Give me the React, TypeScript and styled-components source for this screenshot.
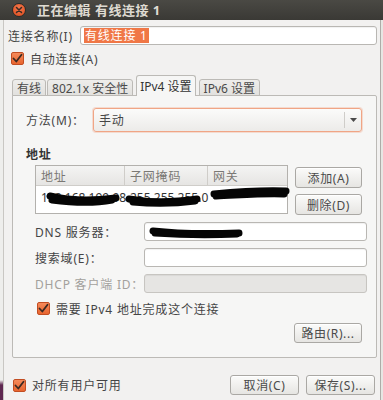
import React from "react";
import styled, { createGlobalStyle } from "styled-components";

const Global = createGlobalStyle`
  html, body { margin: 0; padding: 0; background: #dedcd8; }
  body { font-family: "Noto Sans", "Noto Sans CJK SC", sans-serif; font-size: 12px; color: #3c3c3c; }
  * { box-sizing: border-box; }
`;

const Page = styled.div`
  width: 383px;
  height: 400px;
  display: flex;
  flex-direction: column;
  overflow: hidden;
`;

const TitleBar = styled.div`
  height: 20px;
  flex: none;
  background: linear-gradient(#4a4944, #3a3935);
  display: flex;
  align-items: center;
  padding-left: 12px;
  gap: 11px;
`;

const CloseBtn = styled.div`
  width: 14px;
  height: 14px;
  border-radius: 50%;
  background: radial-gradient(circle at 50% 35%, #f47a4e, #dc4a1c);
  border: 1px solid #2c2b28;
  display: flex;
  align-items: center;
  justify-content: center;
`;

const TitleText = styled.div`
  color: #dfdbd2;
  font-weight: bold;
  font-size: 13px;
  letter-spacing: 0.5px;
  line-height: 20px;
`;

const BodyRow = styled.div`
  flex: 1;
  display: flex;
`;

const Strip = styled.div<{ $w: number }>`
  width: ${(p) => p.$w}px;
  flex: none;
  background: linear-gradient(#eeeeec 0px, #eeeeec 360px, #5e2750 365px, #5e2750 400px);
`;

const RightStrip = styled.div`
  width: 2px;
  flex: none;
  background: #e7e6e3;
`;

const Body = styled.div`
  width: 378px;
  flex: none;
  background: #f2f1f0;
  border-right: 1px solid #aeaca8;
  border-left: 1px solid #c9c7c3;
  padding: 6px 3px 0 4px;
  display: flex;
  flex-direction: column;
`;

const NameRow = styled.div`
  display: flex;
  align-items: center;
  height: 19px;
`;

const Label = styled.div<{ $w?: number; $disabled?: boolean }>`
  width: ${(p) => (p.$w ? `${p.$w}px` : "auto")};
  flex: none;
  font-size: 12px;
  letter-spacing: 0.8px;
  color: ${(p) => (p.$disabled ? "#a3a19d" : "#454545")};
  white-space: nowrap;
`;

const TextInput = styled.div<{ $disabled?: boolean }>`
  flex: 1;
  height: 100%;
  background: ${(p) => (p.$disabled ? "#e6e5e3" : "#ffffff")};
  border: 1px solid ${(p) => (p.$disabled ? "#c7c5c1" : "#b9b7b3")};
  border-radius: 3px;
  box-shadow: inset 0 1px 1px rgba(0, 0, 0, 0.06);
  display: flex;
  align-items: center;
  padding-left: 3px;
  position: relative;
`;

const Selected = styled.span`
  background: #f07746;
  color: #fff;
  font-size: 12px;
  letter-spacing: 0.8px;
  padding: 0 1px;
  line-height: 15px;
`;

const CheckRow = styled.div<{ $mt: number; $ml: number }>`
  display: flex;
  align-items: center;
  gap: 6px;
  margin-top: ${(p) => p.$mt}px;
  margin-left: ${(p) => p.$ml}px;
  height: 13px;
`;

const CheckBox = styled.div`
  width: 13px;
  height: 13px;
  flex: none;
  border-radius: 2px;
  background: linear-gradient(#f58a5a, #e8652f);
  border: 1px solid #c24d22;
  display: flex;
  align-items: center;
  justify-content: center;
`;

const Tabs = styled.div`
  margin-top: 10px;
  margin-left: 4px;
  display: flex;
  align-items: flex-end;
  gap: 1px;
  height: 21px;
  position: relative;
  z-index: 1;
`;

const Tab = styled.div<{ $active?: boolean }>`
  height: ${(p) => (p.$active ? 21 : 17)}px;
  padding: 0 ${(p) => (p.$active ? 3 : 4)}px;
  margin: 0 ${(p) => (p.$active ? 2 : 0)}px;
  background: ${(p) => (p.$active ? "#f6f6f5" : "linear-gradient(#eeedeb, #e2e1de)")};
  border: 1px solid #bcbab6;
  border-bottom: ${(p) => (p.$active ? "none" : "1px solid #bcbab6")};
  border-radius: 3px 3px 0 0;
  display: flex;
  align-items: center;
  font-size: 12px;
  letter-spacing: 0;
  color: ${(p) => (p.$active ? "#333" : "#4a4a4a")};
  white-space: nowrap;
`;

const Panel = styled.div`
  margin-left: 4px;
  margin-top: -1px;
  border: 1px solid #bcbab6;
  border-radius: 0 2px 2px 2px;
  background: #f6f6f5;
  padding: 12px 14px 13px 13px;
  display: flex;
  flex-direction: column;
  height: 263px;
`;

const MethodRow = styled.div`
  display: flex;
  align-items: center;
  height: 24px;
`;

const Combo = styled.div`
  flex: 1;
  height: 100%;
  border: 1px solid #f0a585;
  border-radius: 3px;
  background: linear-gradient(#fbfbfa, #ecebe9);
  box-shadow: 0 0 0 1px rgba(240, 140, 100, 0.25);
  display: flex;
  align-items: center;
  padding-left: 5px;
`;

const ComboText = styled.div`
  flex: 1;
  font-size: 12px;
  letter-spacing: 0.8px;
  color: #454545;
`;

const ComboSep = styled.div`
  width: 1px;
  height: 16px;
  background: #cfcdc9;
`;

const ComboArrow = styled.div`
  width: 16px;
  display: flex;
  justify-content: center;
`;

const Heading = styled.div`
  margin-top: 16px;
  font-weight: bold;
  font-size: 12px;
  letter-spacing: 0.8px;
  line-height: 13px;
  color: #333;
`;

const AddressBlock = styled.div`
  margin-top: 4px;
  margin-left: 9px;
  display: flex;
  gap: 7px;
`;

const Table = styled.div`
  width: 257px;
  height: 49px;
  border: 1px solid #b3b1ad;
  background: #fff;
  display: flex;
  flex-direction: column;
`;

const HeaderRow = styled.div`
  display: grid;
  grid-template-columns: 89px 83px 1fr;
  height: 20px;
  background: linear-gradient(#f4f4f3, #e6e5e3);
  border-bottom: 1px solid #cfcdc9;
`;

const HeaderCell = styled.div`
  border-right: 1px solid #cfcdc9;
  display: flex;
  align-items: center;
  padding-left: 5px;
  font-size: 12px;
  letter-spacing: 0.8px;
  color: #7a7874;
  &:last-child { border-right: none; }
`;

const DataRow = styled.div`
  display: grid;
  grid-template-columns: 89px 83px 1fr;
  height: 22px;
`;

const DataCell = styled.div`
  position: relative;
  display: flex;
  align-items: center;
  padding-left: 5px;
  font-size: 12px;
  color: #333;
  white-space: nowrap;
  overflow: visible;
`;

const Scribble = styled.svg`
  position: absolute;
  pointer-events: none;
`;

const ButtonCol = styled.div`
  display: flex;
  flex-direction: column;
  gap: 6px;
  padding-top: 2px;
`;

const Button = styled.div<{ $w: number; $h?: number }>`
  width: ${(p) => p.$w}px;
  height: ${(p) => p.$h ?? 20}px;
  border: 1px solid #aaa8a4;
  border-radius: 3px;
  background: linear-gradient(#fbfbfa, #e6e5e2);
  box-shadow: inset 0 1px 0 #fff;
  display: flex;
  align-items: center;
  justify-content: center;
  font-size: 12px;
  letter-spacing: 0.6px;
  color: #4a4a4a;
  white-space: nowrap;
`;

const FormGrid = styled.div`
  margin-top: 7px;
  margin-left: 9px;
  display: grid;
  grid-template-columns: 109px 223px;
  grid-auto-rows: 19px;
  row-gap: 7px;
  align-items: center;
`;

const FormInput = styled(TextInput)`
  height: 19px;
`;

const RouteRow = styled.div`
  margin-top: 8px;
  display: flex;
  justify-content: flex-end;
`;

const BottomRow = styled.div`
  margin-top: 17px;
  display: flex;
  align-items: center;
  padding-left: 5px;
`;

const BottomCheck = styled.div`
  display: flex;
  align-items: center;
  gap: 6px;
  flex: 1;
`;

const BottomButtons = styled.div`
  display: flex;
  gap: 7px;
  padding-right: 2px;
`;

const Check = () => (
  <svg width="11" height="11" viewBox="0 0 11 11">
    <path d="M1.5 5.5 L4.3 8.5 L9.5 1.8" fill="none" stroke="#3b2a22" strokeWidth="1.8" strokeLinecap="round" strokeLinejoin="round" />
  </svg>
);

const Blot = ({ left, top, w, h, d }: { left: number; top: number; w: number; h: number; d: string }) => (
  <Scribble style={{ left, top }} width={w} height={h} viewBox={`0 0 ${w} ${h}`}>
    <path d={d} fill="none" stroke="#050505" strokeWidth="7" strokeLinecap="round" strokeLinejoin="round" />
  </Scribble>
);

export default function App() {
  return (
    <Page>
      <Global />
      <TitleBar>
        <CloseBtn>
          <svg width="8" height="8" viewBox="0 0 8 8">
            <path d="M1.5 1.5 L6.5 6.5 M6.5 1.5 L1.5 6.5" stroke="#3a2a24" strokeWidth="1.5" strokeLinecap="round" />
          </svg>
        </CloseBtn>
        <TitleText>正在编辑 有线连接 1</TitleText>
      </TitleBar>
      <BodyRow>
        <Strip $w={3} />
        <Body>
          <NameRow>
            <Label $w={72}>连接名称(I)</Label>
            <TextInput>
              <Selected>有线连接 1</Selected>
            </TextInput>
          </NameRow>
          <CheckRow $mt={7} $ml={3}>
            <CheckBox>
              <Check />
            </CheckBox>
            <Label>自动连接(A)</Label>
          </CheckRow>
          <Tabs>
            <Tab>有线</Tab>
            <Tab>802.1x 安全性</Tab>
            <Tab $active>IPv4 设置</Tab>
            <Tab>IPv6 设置</Tab>
          </Tabs>
          <Panel>
            <MethodRow>
              <Label $w={67}>方法(M)：</Label>
              <Combo>
                <ComboText>手动</ComboText>
                <ComboSep />
                <ComboArrow>
                  <svg width="7" height="4" viewBox="0 0 7 4">
                    <path d="M0 0 L7 0 L3.5 4 Z" fill="#4a4a4a" />
                  </svg>
                </ComboArrow>
              </Combo>
            </MethodRow>
            <Heading>地址</Heading>
            <AddressBlock>
              <Table>
                <HeaderRow>
                  <HeaderCell>地址</HeaderCell>
                  <HeaderCell>子网掩码</HeaderCell>
                  <HeaderCell>网关</HeaderCell>
                </HeaderRow>
                <DataRow>
                  <DataCell>
                    192.168.199.98
                    <Blot left={10} top={2} w={74} h={20} d="M4 8 C20 12 40 14 70 10 M6 12 C30 15 50 15 66 12" />
                  </DataCell>
                  <DataCell>
                    255.255.255.0
                    <Blot left={0} top={3} w={80} h={20} d="M4 10 C20 13 45 14 72 10 M8 13 C30 15 55 14 70 12" />
                  </DataCell>
                  <DataCell>
                    <Blot left={2} top={0} w={82} h={18} d="M4 8 C25 6 50 4 76 5 M6 10 C30 9 55 7 74 8" />
                  </DataCell>
                </DataRow>
              </Table>
              <ButtonCol>
                <Button $w={67} $h={21}>添加(A)</Button>
                <Button $w={67} $h={21}>删除(D)</Button>
              </ButtonCol>
            </AddressBlock>
            <FormGrid>
              <Label>DNS 服务器：</Label>
              <FormInput>
                <Blot left={4} top={1} w={96} h={16} d="M4 7 C30 10 60 10 90 9 M6 9 C35 11 65 11 88 10" />
              </FormInput>
              <Label>搜索域(E)：</Label>
              <FormInput />
              <Label $disabled>DHCP 客户端 ID：</Label>
              <FormInput $disabled />
            </FormGrid>
            <CheckRow $mt={9} $ml={11}>
              <CheckBox>
                <Check />
              </CheckBox>
              <Label>需要 IPv4 地址完成这个连接</Label>
            </CheckRow>
            <RouteRow>
              <Button $w={68}>路由(R)...</Button>
            </RouteRow>
          </Panel>
          <BottomRow>
            <BottomCheck>
              <CheckBox>
                <Check />
              </CheckBox>
              <Label>对所有用户可用</Label>
            </BottomCheck>
            <BottomButtons>
              <Button $w={69} $h={20}>取消(C)</Button>
              <Button $w={69} $h={20}>保存(S)...</Button>
            </BottomButtons>
          </BottomRow>
        </Body>
        <RightStrip />
      </BodyRow>
    </Page>
  );
}
